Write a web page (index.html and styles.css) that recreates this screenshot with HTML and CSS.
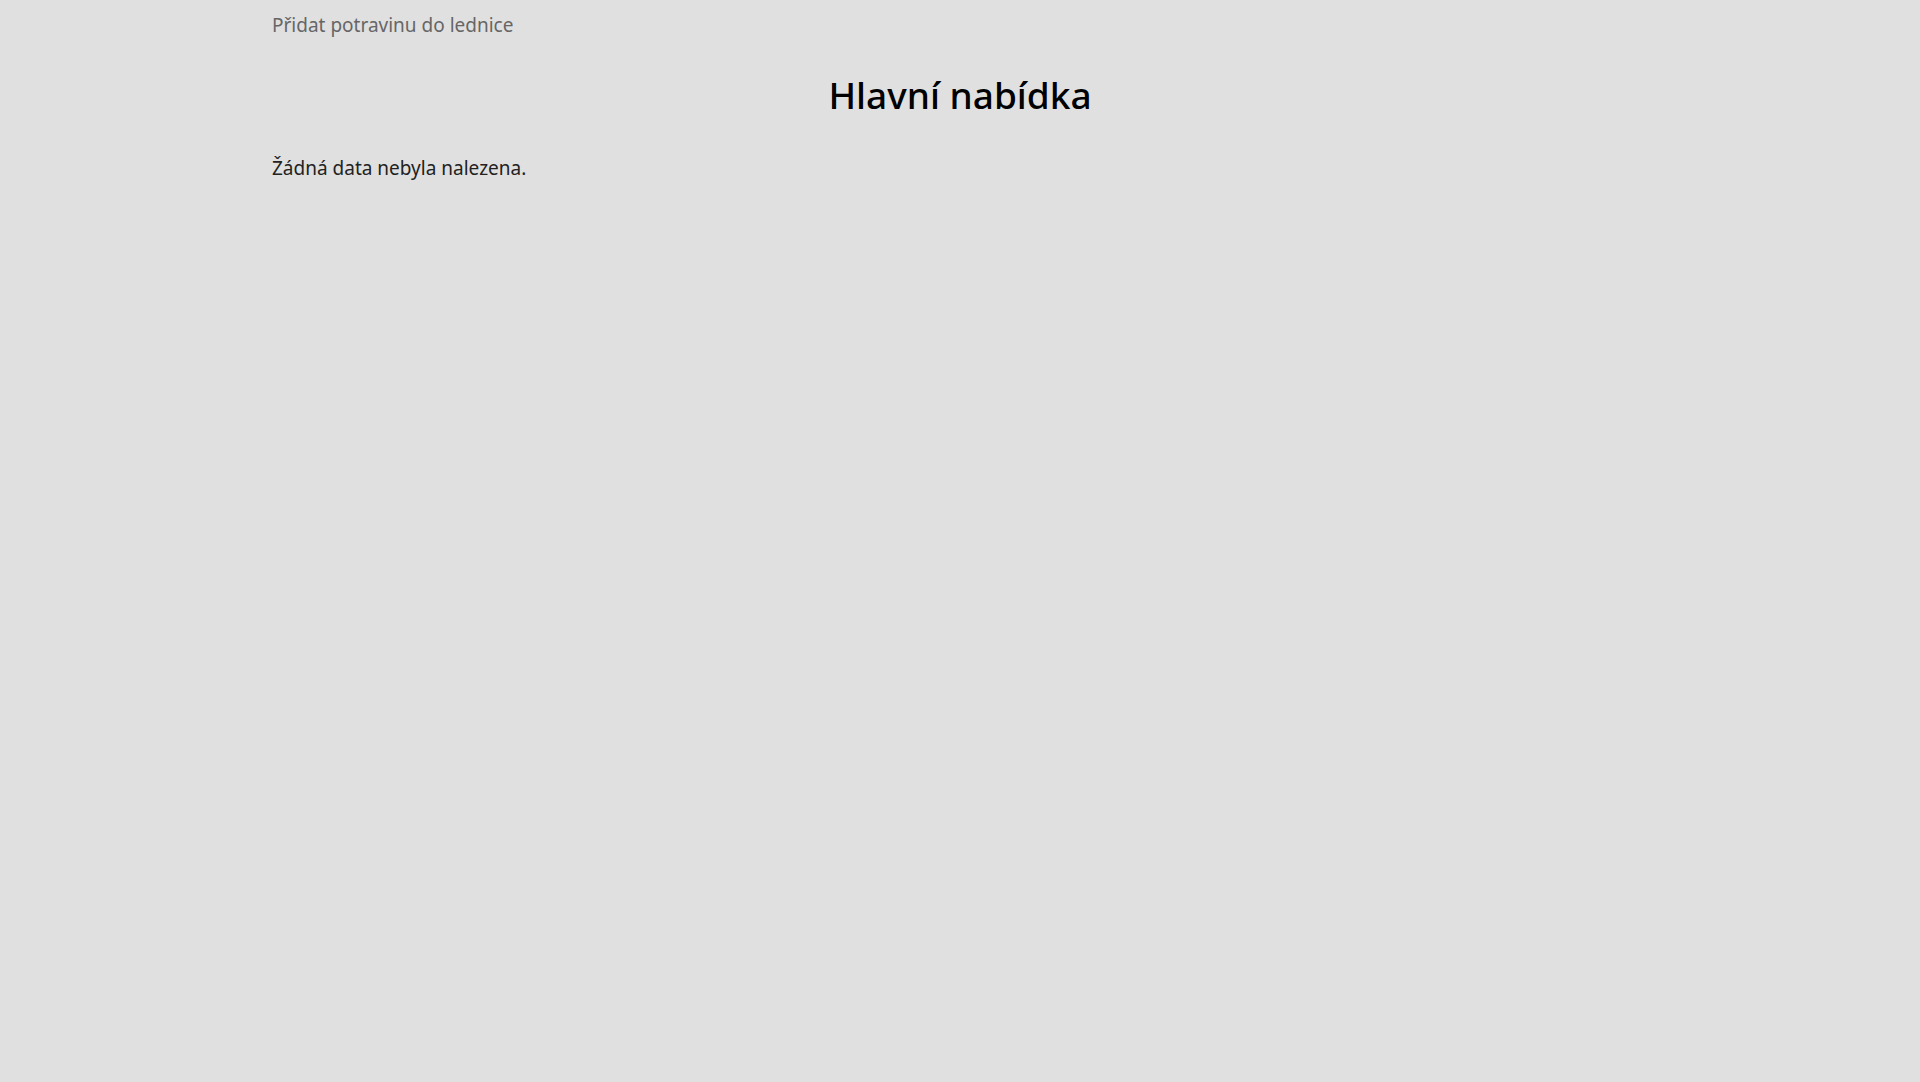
FILE: index.html
```html
<!DOCTYPE html>
<html lang="cs">
<head>
<meta charset="utf-8">
<title>Hlavní nabídka</title>
<link rel="stylesheet" href="styles.css">
</head>
<body>
<div class="page">
  <nav class="nav">
    <a class="nav-link" href="#">Přidat potravinu do lednice</a>
  </nav>
  <h1 class="title">Hlavní nabídka</h1>
  <p class="empty">Žádná data nebyla nalezena.</p>
</div>
</body>
</html>
```
FILE: styles.css
```css
html, body {
  margin: 0;
  padding: 0;
  height: 100%;
  background: #e0e0e0;
}
body {
  font-family: "Noto Sans", "Open Sans", sans-serif;
  color: #222;
}
.page {
  max-width: 1376px;
  margin: 0 auto;
  padding: 0;
}
.nav {
  padding-top: 10px;
}
.nav-link {
  font-size: 19px;
  line-height: 30px;
  color: #666;
  text-decoration: none;
}
.title {
  margin: 31px 0 0;
  text-align: center;
  font-size: 37px;
  line-height: 48px;
  font-weight: 500;
  color: #000;
}
.empty {
  margin: 34px 0 0;
  font-size: 19px;
  line-height: 30px;
}
```
